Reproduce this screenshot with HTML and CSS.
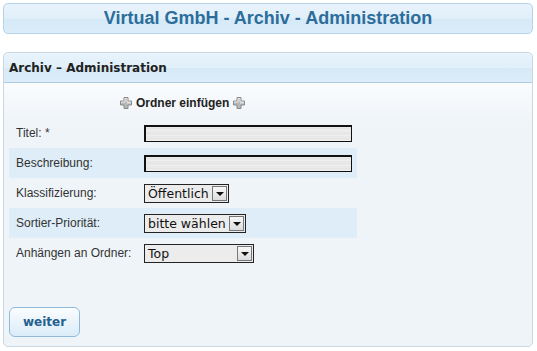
FILE: index.html
```html
<!DOCTYPE html>
<html lang="de">
<head>
  <meta charset="UTF-8">
  <title>Virtual GmbH - Archiv - Administration</title>
  <link rel="stylesheet" href="styles.css">
</head>
<body>

<div class="top-bar">
  <h1>Virtual GmbH - Archiv - Administration</h1>
</div>

<div class="panel">
  <div class="panel-head">Archiv – Administration</div>
  <div class="panel-body">
    <div class="form-title">
      <svg class="plus" width="12" height="12" viewBox="0 0 12 12"><path d="M4 0.5h4v3.5h3.5v4h-3.5v3.5h-4v-3.5h-3.5v-4h3.5z" fill="#b8b8b8" stroke="#8a8a8a" stroke-width="1"/><path d="M5 1.5h2v3.5h3.5v1h-3.5M5 1.5v3.5h-3.5v1" fill="none" stroke="#e6e6e6" stroke-width="1"/></svg>
      <span>Ordner einfügen</span>
      <svg class="plus" width="12" height="12" viewBox="0 0 12 12"><path d="M4 0.5h4v3.5h3.5v4h-3.5v3.5h-4v-3.5h-3.5v-4h3.5z" fill="#b8b8b8" stroke="#8a8a8a" stroke-width="1"/><path d="M5 1.5h2v3.5h3.5v1h-3.5M5 1.5v3.5h-3.5v1" fill="none" stroke="#e6e6e6" stroke-width="1"/></svg>
    </div>

    <div class="rows">
      <div class="row">
        <label>Titel: *</label>
        <div class="text-input"></div>
      </div>
      <div class="row alt">
        <label>Beschreibung:</label>
        <div class="text-input"></div>
      </div>
      <div class="row">
        <label>Klassifizierung:</label>
        <div class="select"><span class="value">Öffentlich</span><span class="arrow"></span></div>
      </div>
      <div class="row alt">
        <label>Sortier-Priorität:</label>
        <div class="select"><span class="value">bitte wählen</span><span class="arrow"></span></div>
      </div>
      <div class="row">
        <label>Anhängen an Ordner:</label>
        <div class="select wide"><span class="value">Top</span><span class="arrow"></span></div>
      </div>
    </div>

    <button class="btn">weiter</button>
  </div>
</div>

</body>
</html>
```
FILE: styles.css
```css
* {
  box-sizing: border-box;
  margin: 0;
  padding: 0;
}

body {
  font-family: "Liberation Sans", Arial, sans-serif;
  background: #fff;
  color: #333;
  padding: 3px 4px 3px 3px;
}

.top-bar {
  height: 31px;
  border: 1px solid #b3d3e8;
  border-radius: 5px;
  background: linear-gradient(#e8f3fc, #e1eff9 50%, #d5e9f7 52%, #dcedf9);
  text-align: center;
}

h1 {
  font-size: 18px;
  font-weight: bold;
  color: #2c6d9c;
  line-height: 29px;
}

.panel {
  margin-top: 18px;
  border: 1px solid #c8d8e4;
  border-radius: 5px;
  background: #eff4f9;
  height: 295px;
  display: flex;
  flex-direction: column;
}

.panel-head {
  height: 30px;
  border-bottom: 1px solid #aacde6;
  border-radius: 5px 5px 0 0;
  background: linear-gradient(#e9f4fc, #e0eff9 50%, #d6e9f7 52%, #dcedf9);
  font-family: "DejaVu Sans", Verdana, sans-serif;
  font-size: 12px;
  font-weight: bold;
  color: #222;
  line-height: 30px;
  padding-left: 5px;
}

.panel-body {
  flex: 1;
  padding: 12px 5px 5px 5px;
  background: linear-gradient(#fafcfd, #eff4f9 40px);
  border-radius: 0 0 5px 5px;
  display: flex;
  flex-direction: column;
}

.form-title {
  display: flex;
  align-items: center;
  gap: 4px;
  padding-left: 111px;
  height: 16px;
  font-size: 12px;
  font-weight: bold;
  color: #222;
}

.rows {
  margin-top: 7px;
  width: 348px;
}

.row {
  display: flex;
  align-items: center;
  height: 30px;
  padding-left: 7px;
  font-size: 12px;
}

.row.alt {
  background: #deedf7;
}

.row label {
  width: 128px;
  color: #333;
}

.text-input {
  width: 208px;
  height: 17px;
  border: 2px solid #111;
  border-width: 2px 1px 1px 2px;
  background: repeating-linear-gradient(#ececec 0, #e2e2e2 2px, #f2f2f2 3px, #e6e6e6 5px);
}

.select {
  display: flex;
  align-items: center;
  height: 19px;
  border: 1px solid #222;
  background: #ececec;
  font-family: "DejaVu Sans", Verdana, sans-serif;
  font-size: 12.5px;
  color: #111;
  padding: 0 1px 0 3px;
}

.select .value {
  flex: 1;
  white-space: nowrap;
  padding-right: 3px;
}

.select.wide {
  width: 110px;
}

.arrow {
  position: relative;
  width: 15px;
  height: 15px;
  border: 1px solid #777;
  background: linear-gradient(#f8f8f8, #dcdcdc);
}

.arrow::after {
  content: "";
  position: absolute;
  left: 3px;
  top: 5px;
  border-left: 4px solid transparent;
  border-right: 4px solid transparent;
  border-top: 4px solid #111;
}

.btn {
  margin-top: auto;
  margin-bottom: 4px;
  width: 71px;
  height: 30px;
  border: 1px solid #8fbadb;
  border-radius: 6px;
  background: linear-gradient(#fbfdff, #eaf4fb 50%, #dbedf9);
  font-family: "DejaVu Sans", Verdana, sans-serif;
  font-size: 12px;
  font-weight: bold;
  color: #23608f;
  cursor: pointer;
}
```
